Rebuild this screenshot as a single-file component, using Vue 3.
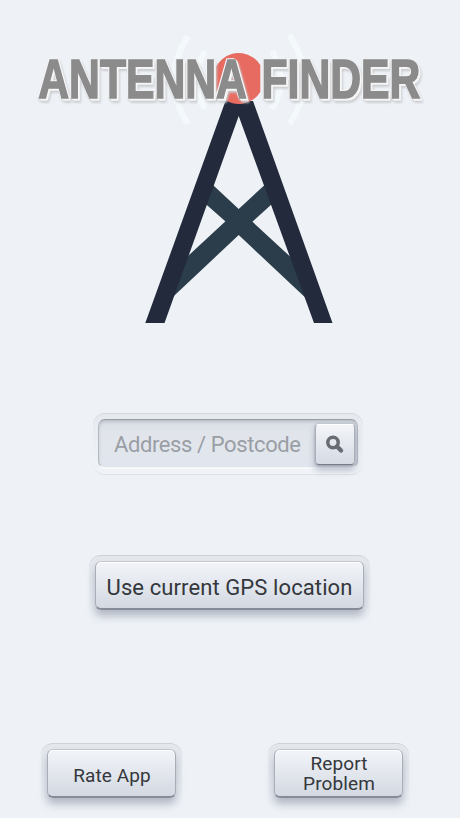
<script setup>
import { ref } from 'vue';
const address = ref('');
const actions = ref([
  { id: 'rate', lines: ['Rate App'] },
  { id: 'report', lines: ['Report', 'Problem'] },
]);
</script>

<template>
  <div class="finder">
    <header class="logo">
      <svg class="logo-art" width="460" height="340" viewBox="0 0 460 340" role="img" aria-label="Antenna Finder">
        <!-- signal waves -->
        <g class="waves">
          <path d="M188 36 Q159.500 80 188 124" />
          <path d="M205 51 Q187 80 205 109" />
          <path d="M289.500 35 Q318.500 80 289.500 124" />
          <path d="M272 51 Q290 80 272 109" />
        </g>
        <!-- tower -->
        <g class="braces">
          <path d="M208 181 L214 186 L238.700 209 L310 275 V302 L238.700 235 L226.700 222.500 L200 199 Z" />
          <path d="M269.500 181 L263.500 186 L238.700 209 L167.500 275 V302 L238.700 235 L251.500 222.500 L277.500 199 Z" />
        </g>
        <path class="legs" d="M225.500 101 H253 L332.500 323 H314 L238.700 116 L164.500 323 H145.300 Z" />
        <path class="beacon" d="M260.300 65 A25.500 25.500 0 1 0 260.300 92 Z" />
        <!-- title -->
        <g class="title">
          <text transform="translate(38.300 98.300) scale(0.776 1)">ANTENNA</text>
          <text transform="translate(261.500 98.300) scale(0.776 1)">FINDER</text>
        </g>
      </svg>
    </header>

    <form class="search" @submit.prevent>
      <div class="field">
        <input v-model="address" class="field-input" type="text" placeholder="Address / Postcode">
        <button class="search-btn" type="submit" aria-label="Search">
          <svg width="20" height="20" viewBox="0 0 20 20">
            <circle cx="8" cy="7.500" r="5.200" />
            <path d="M12 11.500 L16 15.500" />
          </svg>
        </button>
      </div>
    </form>

    <div class="frame gps">
      <button class="btn">Use current GPS location</button>
    </div>

    <footer class="footer">
      <div v-for="item in actions" :key="item.id" class="frame small">
        <button class="btn" :class="{ stacked: item.lines.length > 1 }">
          <span v-for="line in item.lines" :key="line">{{ line }}</span>
        </button>
      </div>
    </footer>
  </div>
</template>

<style>
body {
  background: #eef2f7;
}
</style>

<style scoped>
.finder {
  box-sizing: border-box;
  height: 818px;
  display: flex;
  flex-direction: column;
  align-items: center;
  background: #eef2f7;
  font-family: Roboto, "Liberation Sans", sans-serif;
  overflow: hidden;
}

.logo {
  height: 413px;
}

.logo-art {
  display: block;
}

.waves {
  fill: none;
  stroke: #f4fafc;
  stroke-width: 6;
}

.braces {
  fill: #2b3d4b;
}

.legs {
  fill: #222a3b;
}

.beacon {
  fill: #e76b61;
}

.title {
  font-family: "Liberation Sans", sans-serif;
  font-size: 55px;
  font-weight: 700;
  fill: #8b8b8b;
  stroke: #8b8b8b;
  stroke-width: 1.600;
  filter: drop-shadow(-1px -1px 0.500px #f3f3f4) drop-shadow(1px 1px 0 #f6f6f6) drop-shadow(1px 1px 0.500px #f4f4f4) drop-shadow(1px 2px 1px #c9cbcf);
}

.search {
  box-sizing: border-box;
  width: 270px;
  height: 62px;
  margin-right: 4px;
  padding: 5px 5px 6px;
  border-top: 1px solid #d2d6dc;
  border-bottom: 1px solid #dfe3e8;
  border-radius: 12px;
  background: linear-gradient(#e6eaef, #f0f4f9);
}

.field {
  box-sizing: border-box;
  height: 49px;
  padding: 5px 2px 3px 15px;
  display: flex;
  align-items: center;
  border: 1px solid #b5bac2;
  border-top-color: #989da5;
  border-bottom-color: #f4f6f9;
  border-radius: 7px;
  background: linear-gradient(#d9dde4, #e1e5eb 30%, #e1e6ee);
  box-shadow: inset 0 2px 3px rgba(100, 108, 120, 0.25), 0 1px 0 #f8fafc;
}

.field-input {
  flex: 1;
  min-width: 0;
  padding: 0;
  border: 0;
  outline: 0;
  background: transparent;
  font: 22px Roboto, sans-serif;
  letter-spacing: -0.400px;
  color: #34373c;
}

.field-input::placeholder {
  color: #9a9ea5;
  opacity: 1;
}

.search-btn {
  box-sizing: border-box;
  width: 40px;
  height: 41px;
  padding: 0;
  display: flex;
  align-items: center;
  justify-content: center;
  border: 1px solid #a9aeb7;
  border-top-color: #fff;
  border-bottom-color: #777c88;
  border-radius: 4px;
  background: linear-gradient(#f3f5f9, #d5dae4);
  box-shadow: 0 5px 7px rgba(90, 98, 120, 0.4), 0 0 2px rgba(90, 98, 120, 0.5);
}

.search-btn svg {
  fill: none;
  stroke: #696c72;
  stroke-width: 3.500;
}

.search-btn path {
  stroke-width: 4.500;
  stroke-linecap: round;
}

.frame {
  box-sizing: border-box;
  padding: 5px 6px 0;
  border-top: 1px solid #cdd2d8;
  border-radius: 12px;
  background: linear-gradient(#e4e8ed, #e8ecf2 60%, #eef2f7);
}

.gps {
  width: 281px;
  height: 66px;
  margin-top: 80px;
  margin-right: 1px;
}

.btn {
  box-sizing: border-box;
  width: 100%;
  height: 49px;
  padding: 4px 0 0;
  display: flex;
  flex-direction: column;
  align-items: center;
  justify-content: center;
  border: 1px solid #a8adb7;
  border-top-color: #c4c8ce;
  border-bottom: 2px solid #858b98;
  border-radius: 6px;
  background: linear-gradient(#f2f4f9, #e3e7ed 50%, #d3d8e2);
  box-shadow: 0 6px 8px rgba(90, 98, 120, 0.4), inset 0 1px 0 #fff;
  font: 22px Roboto, sans-serif;
  letter-spacing: 0.100px;
  color: #34373c;
  white-space: nowrap;
}

.footer {
  width: 368px;
  margin-top: 122px;
  margin-right: 10px;
  display: flex;
  justify-content: space-between;
}

.small {
  width: 141px;
  height: 66px;
}

.small .btn {
  padding: 5px 0 0 1px;
  font-size: 19px;
  line-height: 20px;
}

.small .btn.stacked {
  padding-top: 1px;
}
</style>
